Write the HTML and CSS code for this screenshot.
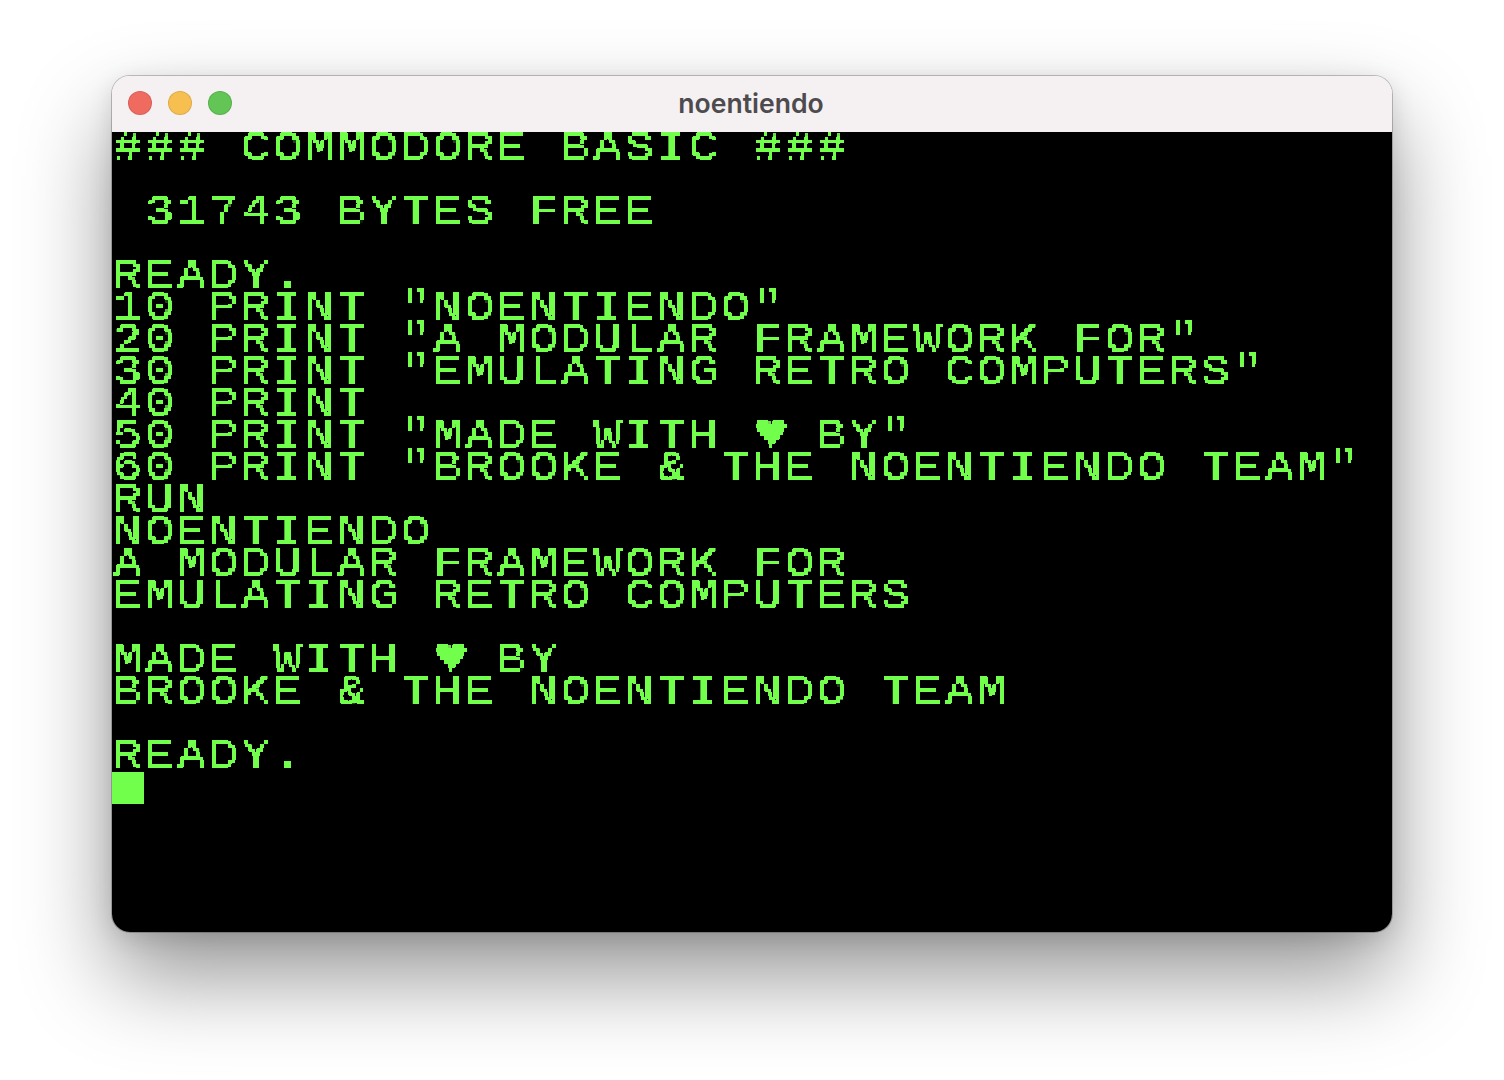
FILE: index.html
```html
<!DOCTYPE html>
<html lang="en">
<head>
<meta charset="utf-8">
<title>noentiendo</title>
<link rel="stylesheet" href="styles.css">
</head>
<body>
<svg class="defs" width="0" height="0" aria-hidden="true">
  <filter id="pixel" x="0" y="0" width="100%" height="100%" color-interpolation-filters="sRGB">
    <feFlood x="1" y="1" width="2" height="2" flood-color="#000"/>
    <feComposite width="4" height="4"/>
    <feTile result="grid"/>
    <feComposite in="SourceGraphic" in2="grid" operator="in"/>
    <feMorphology operator="dilate" radius="1"/>
    <feComponentTransfer>
      <feFuncA type="linear" slope="20" intercept="-13"/>
    </feComponentTransfer>
  </filter>
</svg>
<main class="window">
  <header class="titlebar">
    <div class="lights">
      <span class="light red"></span>
      <span class="light yellow"></span>
      <span class="light green"></span>
    </div>
    <h1 class="title">noentiendo</h1>
  </header>
  <section class="screen">
    <div class="text">
      <div class="glyphs">
        <div class="line">### COMMODORE BASIC ###</div>
        <div class="line"> </div>
        <div class="line"> 31743 BYTES FREE</div>
        <div class="line"> </div>
        <div class="line">READY.</div>
        <div class="line">10 PRINT "NOENTIENDO"</div>
        <div class="line">20 PRINT "A MODULAR FRAMEWORK FOR"</div>
        <div class="line">30 PRINT "EMULATING RETRO COMPUTERS"</div>
        <div class="line">40 PRINT</div>
        <div class="line">50 PRINT "MADE WITH <span class="heart">♥</span> BY"</div>
        <div class="line">60 PRINT "BROOKE &amp; THE NOENTIENDO TEAM"</div>
        <div class="line">RUN</div>
        <div class="line">NOENTIENDO</div>
        <div class="line">A MODULAR FRAMEWORK FOR</div>
        <div class="line">EMULATING RETRO COMPUTERS</div>
        <div class="line"> </div>
        <div class="line">MADE WITH <span class="heart">♥</span> BY</div>
        <div class="line">BROOKE &amp; THE NOENTIENDO TEAM</div>
        <div class="line"> </div>
        <div class="line">READY.</div>
      </div>
    </div>
    <div class="cursor"></div>
  </section>
</main>
</body>
</html>
```
FILE: styles.css
```css
html, body {
  margin: 0;
  height: 1080px;
  overflow: hidden;
  background: #fff;
}
.defs {
  position: absolute;
}
.window {
  box-sizing: border-box;
  width: 1280px;
  height: 856px;
  margin: 76px 0 0 112px;
  border-radius: 18px;
  overflow: hidden;
  display: flex;
  flex-direction: column;
  box-shadow: 0 0 0 1px rgba(0,0,0,.22), 0 44px 90px rgba(0,0,0,.42), 0 6px 24px rgba(0,0,0,.12);
}
.titlebar {
  height: 56px;
  flex: none;
  display: flex;
  align-items: center;
  justify-content: center;
  position: relative;
  background: #f5f1f3;
}
.lights {
  position: absolute;
  left: 16px;
  top: 15px;
  display: flex;
  gap: 16px;
}
.light {
  width: 24px;
  height: 24px;
  box-sizing: border-box;
  border-radius: 50%;
  border: 1px solid rgba(0,0,0,.1);
}
.red { background: #ef6b60; }
.yellow { background: #f6bf50; }
.green { background: #62c555; }
.title {
  margin: 0 2px 2px 0;
  font: 600 26.6px/1 Inter, "Liberation Sans", sans-serif;
  color: #4d4b4d;
}
.screen {
  flex: 1;
  background: #000;
  color: #72ff4c;
  overflow: hidden;
}
.text {
  height: 640px;
  filter: url(#pixel);
  font: 400 42px/32px "Liberation Mono", "DejaVu Sans Mono", monospace;
}
.glyphs {
  transform: scaleX(1.14);
  transform-origin: 0 0;
  letter-spacing: 2.87px;
}
.line {
  height: 32px;
  padding: 1px 0 0 1px;
  box-sizing: border-box;
  white-space: pre;
}
.heart {
  display: inline-block;
  width: 28.07px;
  font-size: 52px;
  line-height: 28px;
  letter-spacing: 0;
  vertical-align: top;
}
.cursor {
  width: 32px;
  height: 32px;
  background: #72ff4c;
}
```
